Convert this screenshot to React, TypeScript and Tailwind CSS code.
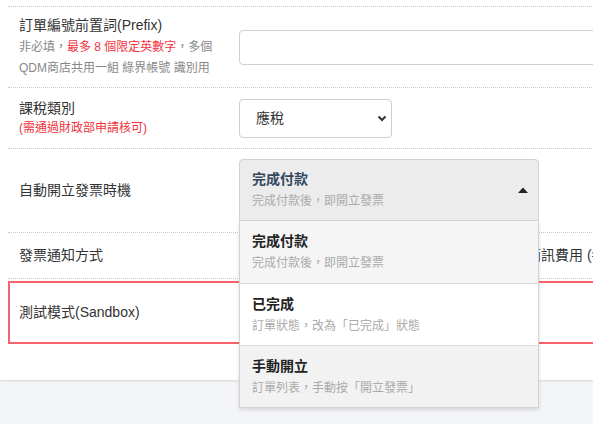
import React from "react";

const font = "font-['Liberation_Sans','Noto_Sans_CJK_TC',sans-serif]";

function Row({
  label,
  children,
  className = "",
}: {
  label: React.ReactNode;
  children?: React.ReactNode;
  className?: string;
}) {
  return (
    <div className={`flex items-center border-b border-dotted border-[#c8c8c8] ${className}`}>
      <div className="w-[231px] shrink-0 pl-[11px]">{label}</div>
      <div className="flex-1 min-w-0">{children}</div>
    </div>
  );
}

const options = [
  { title: "完成付款", desc: "完成付款後，即開立發票", bg: "bg-[#f5f5f5]" },
  { title: "已完成", desc: "訂單狀態，改為「已完成」狀態", bg: "bg-white" },
  { title: "手動開立", desc: "訂單列表，手動按「開立發票」", bg: "bg-[#f2f2f2]" },
];

export default function App() {
  return (
    <div className={`relative h-[424px] w-[593px] overflow-hidden bg-[#f4f5f7] ${font}`}>
      <div className="w-[720px] bg-white pl-2 pt-[6px] shadow-[0_1px_2px_rgba(0,0,0,0.12)]">
        <div className="border-t border-dotted border-[#c8c8c8]" />
        <Row
          className="h-[81px]"
          label={
            <div>
              <div className="text-[14px] leading-[20px] text-[#333]">訂單編號前置詞(Prefix)</div>
              <div className="mt-[2px] text-[12px] leading-[21px] text-[#888]">
                非必填，<span className="text-[#f5333f]">最多 8 個限定英數字</span>，多個
                <br />
                QDM商店共用一組 綠界帳號 識別用
              </div>
            </div>
          }
        >
          <input className="h-[35px] w-full rounded-[4px] border border-[#cfcfcf] bg-white" />
        </Row>
        <Row
          className="h-[61px]"
          label={
            <div>
              <div className="text-[14px] leading-[20px] text-[#333]">課稅類別</div>
              <div className="text-[12px] leading-[20px] text-[#f0323c]">(需通過財政部申請核可)</div>
            </div>
          }
        >
          <div className="flex h-[39px] w-[153px] items-center justify-between rounded-[4px] border border-[#cfcfcf] pl-4 pr-[4px] text-[14px] text-[#333]">
            <span>應稅</span>
            <svg width="10" height="8" viewBox="0 0 10 8">
              <path d="M1.5 2.5 L5 6 L8.5 2.5" fill="none" stroke="#333" strokeWidth="2" />
            </svg>
          </div>
        </Row>
        <Row
          className="h-[84px]"
          label={<div className="text-[14px] text-[#333]">自動開立發票時機</div>}
        />
        <Row
          className="h-[46px]"
          label={<div className="text-[14px] text-[#333]">發票通知方式</div>}
        >
          <div className="whitespace-nowrap pl-[8px] text-[14px] text-[#333]">
            以電子郵件寄送發票通知，如選擇簡訊將產生簡訊費用 (每則 1 元)
          </div>
        </Row>
        <div className="mt-[2px] flex h-[63px] items-center border-2 border-[#f4636a] pl-[9px]">
          <div className="text-[14px] text-[#333]">測試模式(Sandbox)</div>
        </div>
        <div className="h-[36px]" />
      </div>

      <div className="absolute left-[239px] top-[159px] w-[300px]">
        <div className="flex h-[62px] items-center justify-between rounded-t-[4px] border border-[#d2d2d2] bg-[#ececec] pl-3 pr-[10px]">
          <div>
            <div className="text-[14px] font-bold leading-[22px] text-[#34495e]">完成付款</div>
            <div className="text-[12px] leading-[22px] text-[#aaa]">完成付款後，即開立發票</div>
          </div>
          <svg width="10" height="6" viewBox="0 0 10 6">
            <path d="M0 6 L5 0.5 L10 6 Z" fill="#222" />
          </svg>
        </div>
        <div className="border border-t-0 border-[#d2d2d2] shadow-[0_2px_4px_rgba(0,0,0,0.12)]">
          {options.map((o, i) => (
            <div
              key={o.title}
              className={`flex h-[62px] flex-col justify-center pl-3 ${o.bg} ${i > 0 ? "border-t border-[#dcdcdc]" : ""}`}
            >
              <div className="text-[14px] font-bold leading-[22px] text-[#222]">{o.title}</div>
              <div className="text-[12px] leading-[22px] text-[#aaa]">{o.desc}</div>
            </div>
          ))}
        </div>
      </div>
    </div>
  );
}
